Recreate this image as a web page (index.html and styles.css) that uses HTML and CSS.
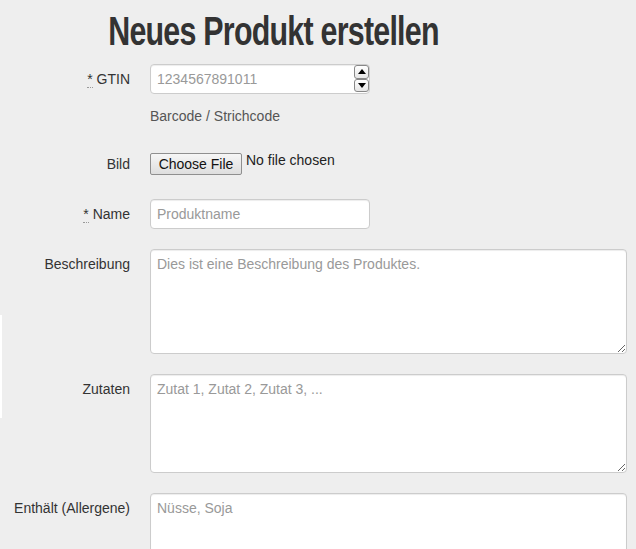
FILE: index.html
```html
<!DOCTYPE html>
<html lang="de">
<head>
<meta charset="utf-8">
<title>Neues Produkt erstellen</title>
<link rel="stylesheet" href="styles.css">
</head>
<body>
<div class="edge-strip"></div>
<div class="page">
  <h1 class="title"><span class="title-text">Neues Produkt erstellen</span></h1>
  <form class="form">
    <div class="group">
      <label class="label"><abbr class="req" title="required">*</abbr> GTIN</label>
      <div class="controls">
        <div class="number-wrap">
          <input class="input" type="text" placeholder="1234567891011">
          <span class="spinner"><span class="spin up"></span><span class="spin down"></span></span>
        </div>
        <p class="help">Barcode / Strichcode</p>
      </div>
    </div>
    <div class="group">
      <label class="label">Bild</label>
      <div class="controls file-controls">
        <span class="file-btn">Choose File</span>
        <span class="file-text">No file chosen</span>
      </div>
    </div>
    <div class="group">
      <label class="label"><abbr class="req" title="required">*</abbr> Name</label>
      <div class="controls">
        <input class="input" type="text" placeholder="Produktname">
      </div>
    </div>
    <div class="group">
      <label class="label">Beschreibung</label>
      <div class="controls">
        <textarea class="area area-desc" placeholder="Dies ist eine Beschreibung des Produktes."></textarea>
      </div>
    </div>
    <div class="group">
      <label class="label">Zutaten</label>
      <div class="controls">
        <textarea class="area area-zut" placeholder="Zutat 1, Zutat 2, Zutat 3, ..."></textarea>
      </div>
    </div>
    <div class="group">
      <label class="label">Enthält (Allergene)</label>
      <div class="controls">
        <textarea class="area area-all" placeholder="Nüsse, Soja"></textarea>
      </div>
    </div>
  </form>
</div>
</body>
</html>
```

FILE: styles.css
```css
html, body {
  margin: 0;
  padding: 0;
  background: #eeeeee;
}
body {
  font-family: "Liberation Sans", Arial, sans-serif;
  font-size: 14px;
  line-height: 20px;
  color: #333333;
  overflow: hidden;
}
.edge-strip {
  position: absolute;
  left: 0;
  top: 315px;
  width: 2px;
  height: 103px;
  background: #ffffff;
}
.page {
  padding-top: 11px;
}
.title {
  width: 546px;
  margin: 0 0 13px 0;
  text-align: center;
  font-family: "Liberation Sans", Arial, sans-serif;
  font-weight: bold;
  font-size: 40px;
  line-height: 40px;
  color: #333333;
}
.title-text {
  display: inline-block;
  letter-spacing: -1px;
  transform: scaleX(0.76);
  transform-origin: center;
  white-space: nowrap;
}
.form {
  display: flex;
  flex-direction: column;
  gap: 20px;
}
.group {
  display: flex;
  gap: 20px;
}
.label {
  width: 130px;
  flex: none;
  text-align: right;
  padding-top: 5px;
  line-height: 20px;
  color: #333333;
}
.req {
  text-decoration: none;
  border-bottom: 1px dotted #999999;
  cursor: help;
}
.controls {
  flex: 1;
  padding-right: 10px;
}
.number-wrap {
  position: relative;
  width: 220px;
}
.input {
  box-sizing: border-box;
  width: 220px;
  height: 30px;
  padding: 4px 6px;
  margin: 0;
  border: 1px solid #cccccc;
  border-radius: 4px;
  background: #ffffff;
  box-shadow: inset 0 1px 1px rgba(0,0,0,0.075);
  font-family: "Liberation Sans", Arial, sans-serif;
  font-size: 14px;
  line-height: 20px;
  color: #555555;
  display: block;
}
.input::placeholder, .area::placeholder {
  color: #999999;
}
.spinner {
  position: absolute;
  right: 1px;
  top: 1px;
  width: 15px;
  height: 27px;
  display: flex;
  flex-direction: column;
}
.spin {
  flex: 1;
  box-sizing: border-box;
  border: 1px solid #888888;
  border-radius: 3px;
  background: linear-gradient(#ffffff, #e6e6e6);
  display: flex;
  align-items: center;
  justify-content: center;
}
.spin.up::after {
  content: "";
  border-left: 4px solid transparent;
  border-right: 4px solid transparent;
  border-bottom: 5px solid #000000;
}
.spin.down::after {
  content: "";
  border-left: 4px solid transparent;
  border-right: 4px solid transparent;
  border-top: 5px solid #000000;
}
.help {
  margin: 12px 0 0 0;
  padding-bottom: 3px;
  line-height: 20px;
  color: #555555;
}
.file-controls {
  display: flex;
  align-items: flex-start;
  height: 30px;
  gap: 4px;
}
.file-btn {
  margin-top: 4px;
  box-sizing: border-box;
  width: 92px;
  height: 22px;
  border: 1px solid #8f8f8f;
  border-radius: 2px;
  background: linear-gradient(#f6f6f6, #dedede);
  text-align: center;
  font-size: 14px;
  line-height: 20px;
  color: #111111;
}
.file-text {
  margin-top: 1px;
  color: #222222;
}
.area {
  display: block;
  box-sizing: border-box;
  width: 477px;
  margin: 0;
  padding: 4px 6px;
  border: 1px solid #cccccc;
  border-radius: 4px;
  background: #ffffff;
  box-shadow: inset 0 1px 1px rgba(0,0,0,0.075);
  font-family: "Liberation Sans", Arial, sans-serif;
  font-size: 14px;
  line-height: 20px;
  color: #555555;
  resize: vertical;
}
.area-desc { height: 105px; }
.area-zut { height: 99px; }
.area-all { height: 100px; }
```
